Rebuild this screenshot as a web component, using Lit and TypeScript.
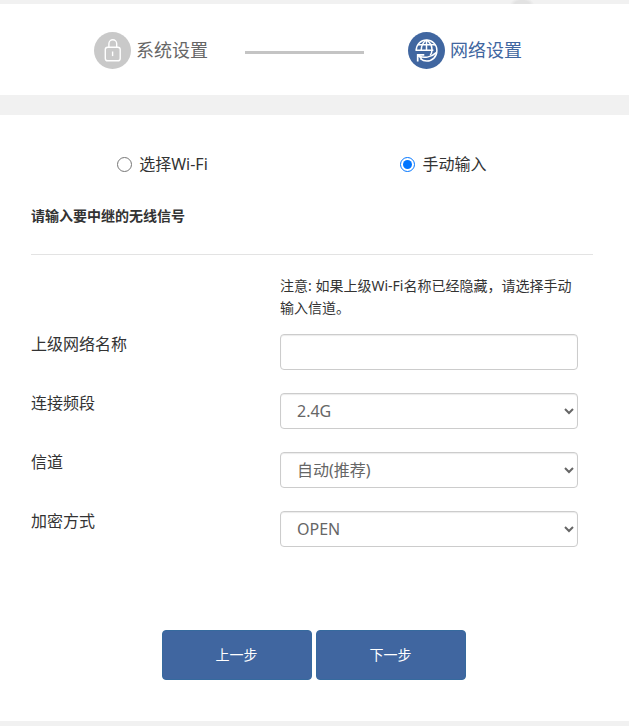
import { LitElement, html, css } from "lit";
import { customElement, state } from "lit/decorators.js";

interface SelectField {
  id: string;
  label: string;
  options: string[];
}

const SELECT_FIELDS: SelectField[] = [
  { id: "band", label: "连接频段", options: ["2.4G", "5G"] },
  { id: "channel", label: "信道", options: ["自动(推荐)", "1", "6", "11"] },
  { id: "security", label: "加密方式", options: ["OPEN", "WPA-PSK", "WPA2-PSK"] },
];

@customElement("wizard-steps")
export class WizardSteps extends LitElement {
  static styles = css`
    :host {
      display: block;
      background: #fff;
    }
    .steps {
      display: flex;
      align-items: center;
      justify-content: center;
      margin: 0;
      padding: 28px 13px 26px 0;
      list-style: none;
    }
    .step {
      display: flex;
      align-items: center;
      gap: 5px;
      font-size: 18px;
      line-height: 37px;
      color: #666;
    }
    .step.current {
      color: #4066a0;
    }
    .icon {
      display: block;
      width: 37px;
      height: 37px;
    }
    .line {
      width: 119px;
      height: 3px;
      margin: 4px 44px 0 37px;
      background: #c4c4c4;
    }
  `;

  render() {
    return html`
      <ol class="steps">
        <li class="step">
          <svg class="icon" viewBox="0 0 37 37" aria-hidden="true">
            <circle cx="18.5" cy="18.5" r="18.5" fill="#c9c9c9" />
            <g fill="none" stroke="#fff" stroke-width="1.4">
              <rect x="11.3" y="15.2" width="14.9" height="13.6" rx="2.4" />
              <path d="M14.9 15.2v-3.5a3.9 3.9 0 0 1 7.8 0v3.5" />
              <path d="M18.6 19.5v4.6" />
            </g>
          </svg>
          <span>系统设置</span>
        </li>
        <li class="line" role="presentation"></li>
        <li class="step current" aria-current="step">
          <svg class="icon" viewBox="0 0 37 37" aria-hidden="true">
            <circle cx="18.5" cy="18.5" r="18.5" fill="#4066a0" />
            <g fill="none" stroke="#fff" stroke-width="1.5">
              <path d="M8.2 18.6C8.2 12.6 12.8 8 18.5 8S28.9 12.6 28.9 18.4C28.9 24.8 24.4 29 18.8 29C16.4 29 14.3 28.2 12.4 26.6" />
              <path d="M7.6 18.2h17.8M10.2 12.7h16.8" />
              <path d="M18.5 8v10.2" />
              <path d="M18.5 8c-3.6 2.4-5.2 5.8-5.3 10.2" />
              <path d="M18.5 8c3.9 2.4 5.6 5.8 5.5 10.2-.1 1.9-.7 3.6-1.7 5" />
              <path d="M11.4 23.8c3.8 2.8 11.8 1.8 16.8-3.2" />
              <path d="M9.7 29.4V22.8h6.6M10 23l3.6 3.6" stroke-width="1.7" />
            </g>
          </svg>
          <span>网络设置</span>
        </li>
      </ol>
    `;
  }
}

@customElement("app-root")
export class AppRoot extends LitElement {
  static styles = css`
    :host {
      display: block;
      box-sizing: border-box;
      min-height: 100vh;
      padding: 4px 0;
      background: radial-gradient(ellipse 12px 6px at 83% 4px, #e2e2e2 60%, #f1f1f1) no-repeat 0 0 / 100% 4px #f1f1f1;
      color: #333;
      font-family: "Noto Sans", "Noto Sans CJK SC", sans-serif;
      font-size: 16px;
      line-height: 22px;
    }
    form {
      margin-top: 20px;
      padding: 38px 36px 41px 31px;
      background: #fff;
    }
    .modes {
      display: grid;
      grid-template-columns: 1fr 1fr;
      margin: 0;
      padding: 0;
      border: 0;
    }
    .mode {
      display: flex;
      align-items: center;
      justify-content: center;
      gap: 7px;
      padding-right: 18px;
    }
    .mode input {
      width: 15px;
      height: 15px;
      margin: 0;
    }
    h2 {
      margin: 30px 0 0;
      padding-bottom: 27px;
      border-bottom: 1px solid #e3e3e3;
      font-size: 14px;
      line-height: 22px;
      font-weight: 700;
    }
    .fields {
      display: grid;
      grid-template-columns: 249fr 298fr;
      row-gap: 23px;
      padding: 20px 15px 0 0;
    }
    .fields label {
      line-height: 20px;
    }
    .note {
      grid-column: 2;
      margin: 0 0 -8px;
      font-size: 14px;
    }
    .control {
      box-sizing: border-box;
      width: 100%;
      height: 36px;
      margin: 0;
      padding: 0 12px;
      border: 1px solid #ccc;
      border-radius: 4px;
      background: #fff;
      box-shadow: inset 0 1px 1px rgba(0, 0, 0, 0.08);
      color: #666;
      font: inherit;
    }
    .actions {
      display: flex;
      justify-content: center;
      gap: 4px;
      padding: 83px 0 0 3px;
    }
    button {
      width: 150px;
      height: 50px;
      padding: 0;
      border: 1px solid #366a9e;
      border-radius: 4px;
      background: #4066a0;
      color: #fff;
      font: inherit;
      font-size: 14px;
    }
  `;

  @state() private mode = "manual";

  private setMode(e: Event) {
    this.mode = (e.target as HTMLInputElement).value;
  }

  render() {
    return html`
      <wizard-steps></wizard-steps>
      <form @submit=${(e: Event) => e.preventDefault()}>
        <fieldset class="modes">
          <label class="mode">
            <input type="radio" name="mode" value="scan" .checked=${this.mode === "scan"} @change=${this.setMode} />
            选择Wi-Fi
          </label>
          <label class="mode">
            <input type="radio" name="mode" value="manual" .checked=${this.mode === "manual"} @change=${this.setMode} />
            手动输入
          </label>
        </fieldset>
        <h2>请输入要中继的无线信号</h2>
        <div class="fields">
          <p class="note">注意: 如果上级Wi-Fi名称已经隐藏，请选择手动输入信道。</p>
          <label for="ssid">上级网络名称</label>
          <input class="control" id="ssid" type="text" />
          ${SELECT_FIELDS.map(
            (f) => html`
              <label for=${f.id}>${f.label}</label>
              <select class="control" id=${f.id}>
                ${f.options.map((o) => html`<option>${o}</option>`)}
              </select>
            `
          )}
        </div>
        <div class="actions">
          <button type="button">上一步</button>
          <button type="submit">下一步</button>
        </div>
      </form>
    `;
  }
}
